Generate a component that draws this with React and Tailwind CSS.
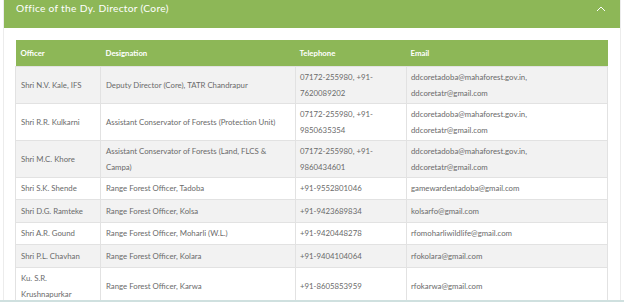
// Office contact table — green accordion panel with officer list

const rows = [
  {
    officer: "Shri N.V. Kale, IFS",
    designation: "Deputy Director (Core), TATR Chandrapur",
    phone: ["07172-255980, +91-", "7620089202"],
    email: ["ddcoretadoba@mahaforest.gov.in,", "ddcoretatr@gmail.com"],
    tall: true,
  },
  {
    officer: "Shri R.R. Kulkarni",
    designation: "Assistant Conservator of Forests (Protection Unit)",
    phone: ["07172-255980, +91-", "9850635354"],
    email: ["ddcoretadoba@mahaforest.gov.in,", "ddcoretatr@gmail.com"],
    tall: true,
  },
  {
    officer: "Shri M.C. Khore",
    designation: ["Assistant Conservator of Forests (Land, FLCS &", "Campa)"],
    phone: ["07172-255980, +91-", "9860434601"],
    email: ["ddcoretadoba@mahaforest.gov.in,", "ddcoretatr@gmail.com"],
    tall: true,
  },
  { officer: "Shri S.K. Shende", designation: "Range Forest Officer, Tadoba", phone: "+91-9552801046", email: "gamewardentadoba@gmail.com" },
  { officer: "Shri D.G. Ramteke", designation: "Range Forest Officer, Kolsa", phone: "+91-9423689834", email: "kolsarfo@gmail.com" },
  { officer: "Shri A.R. Gound", designation: "Range Forest Officer, Moharli (W.L.)", phone: "+91-9420448278", email: "rfomoharliwildlife@gmail.com" },
  { officer: "Shri P.L. Chavhan", designation: "Range Forest Officer, Kolara", phone: "+91-9404104064", email: "rfokolara@gmail.com" },
  {
    officer: ["Ku. S.R.", "Krushnapurkar"],
    designation: "Range Forest Officer, Karwa",
    phone: "+91-8605853959",
    email: "rfokarwa@gmail.com",
    tall: true,
  },
]

// a cell value may be one line or a list of lines
function Lines({ value }) {
  if (Array.isArray(value)) {
    return value.map((line, i) => <div key={i}>{line}</div>)
  }
  return value
}

export default function App() {
  return (
    <div className="w-[624px] h-[302px] overflow-hidden bg-white font-['Lato',sans-serif]">
      <div className="mx-[3px] h-[300px] flex flex-col border-x border-[#ececec]">

        {/* Green panel title */}
        <div className="h-[28px] shrink-0 bg-[#8db757] flex items-start justify-between pl-[12px] pr-[14px] pt-[2px]">
          <span className="text-white text-[10.2px] leading-[13px] tracking-[0.3px]">
            Office of the Dy. Director (Core)
          </span>
          <svg width="10" height="6" viewBox="0 0 10 6" className="mt-[4px]">
            <path d="M1 5 L5 1 L9 5" fill="none" stroke="white" strokeWidth="1" />
          </svg>
        </div>

        {/* Table body */}
        <div className="flex-1 pt-[12px] px-[11px] overflow-hidden">
          <table className="w-[592px] table-fixed border-collapse text-[7.8px] text-[#6a6a6a] leading-[16px]">
            <colgroup>
              <col className="w-[85px]" />
              <col className="w-[195px]" />
              <col className="w-[111px]" />
              <col className="w-[201px]" />
            </colgroup>
            <thead>
              <tr className="h-[26px] bg-[#8db757] text-white font-bold text-left">
                <th className="px-[5px] font-bold">Officer</th>
                <th className="px-[5px] font-bold">Designation</th>
                <th className="px-[4px] font-bold">Telephone</th>
                <th className="px-[4px] font-bold">Email</th>
              </tr>
            </thead>
            <tbody>
              {rows.map((r, i) => (
                <tr
                  key={i}
                  className={`${r.tall ? "h-[37px]" : "h-[22.5px]"} ${i % 2 === 0 ? "bg-[#f2f2f2]" : "bg-white"}`}
                >
                  <td className="px-[5px] py-0 border border-[#e2e2e2] align-middle"><Lines value={r.officer} /></td>
                  <td className="px-[5px] py-0 border border-[#e2e2e2] align-middle"><Lines value={r.designation} /></td>
                  <td className="px-[4px] py-0 border border-[#e2e2e2] align-middle"><Lines value={r.phone} /></td>
                  <td className="px-[4px] py-0 border border-[#e2e2e2] align-middle"><Lines value={r.email} /></td>
                </tr>
              ))}
            </tbody>
          </table>
        </div>
      </div>
      <div className="h-[2px] bg-[#cfe0df]" />
    </div>
  )
}
